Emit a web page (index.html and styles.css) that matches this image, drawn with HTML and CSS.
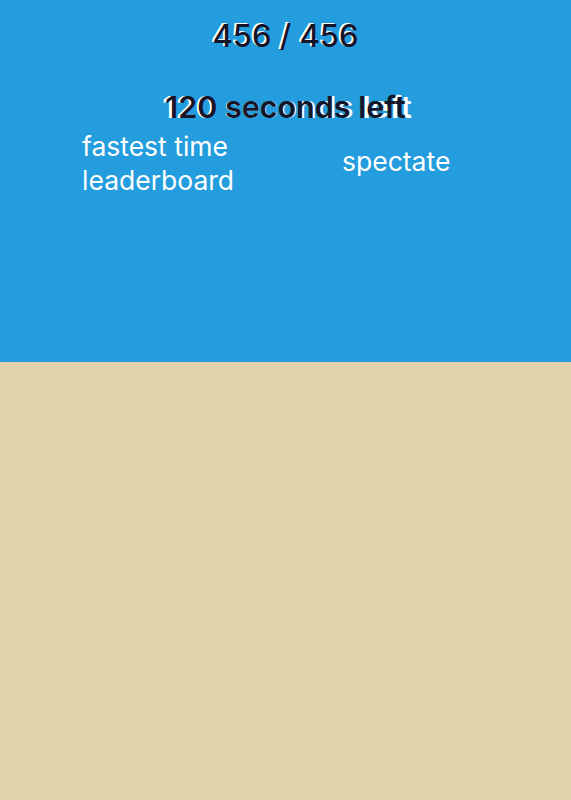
FILE: index.html
```html
<!DOCTYPE html>
<html>
<head>
<meta charset="utf-8">
<link rel="stylesheet" href="styles.css">
</head>
<body>
<div class="top">
  <div class="score">456 / 456</div>
  <div class="timer"><span class="main" data-text="120 seconds left">120 seconds left</span></div>
  <div class="links">
    <div class="left">
      <div class="link">fastest time</div>
      <div class="link">leaderboard</div>
    </div>
    <div class="right">
      <div class="link">spectate</div>
    </div>
  </div>
</div>
</body>
</html>
```
FILE: styles.css
```css
html, body {
  margin: 0;
  padding: 0;
}
body {
  background: #e2d2ac;
  font-family: Inter, "Noto Sans", sans-serif;
  width: 571px;
  height: 800px;
}
.top {
  background: #239ddd;
  height: 362px;
  box-sizing: border-box;
  padding-top: 16px;
}
.score {
  text-align: center;
  font-size: 31px;
  font-weight: 500;
  color: #15152a;
  text-shadow: -2px -1px 0 #ffffff;
  line-height: 40px;
}
.timer {
  text-align: center;
  font-size: 30.5px;
  font-weight: 600;
  line-height: 40px;
  margin-top: 31px;
  height: 40px;
}
.timer .main {
  position: relative;
  display: inline-block;
  color: #15152a;
  z-index: 0;
}
.timer .main::before {
  content: attr(data-text);
  position: absolute;
  left: -3px;
  top: 0;
  color: #ffffff;
  letter-spacing: 0.6px;
  white-space: nowrap;
  z-index: -1;
}
.links {
  display: flex;
  padding-left: 82px;
  margin-top: 2px;
}
.left {
  width: 260px;
}
.right {
  padding-top: 15px;
}
.link {
  color: #ffffff;
  font-size: 26.5px;
  line-height: 34px;
}
```
